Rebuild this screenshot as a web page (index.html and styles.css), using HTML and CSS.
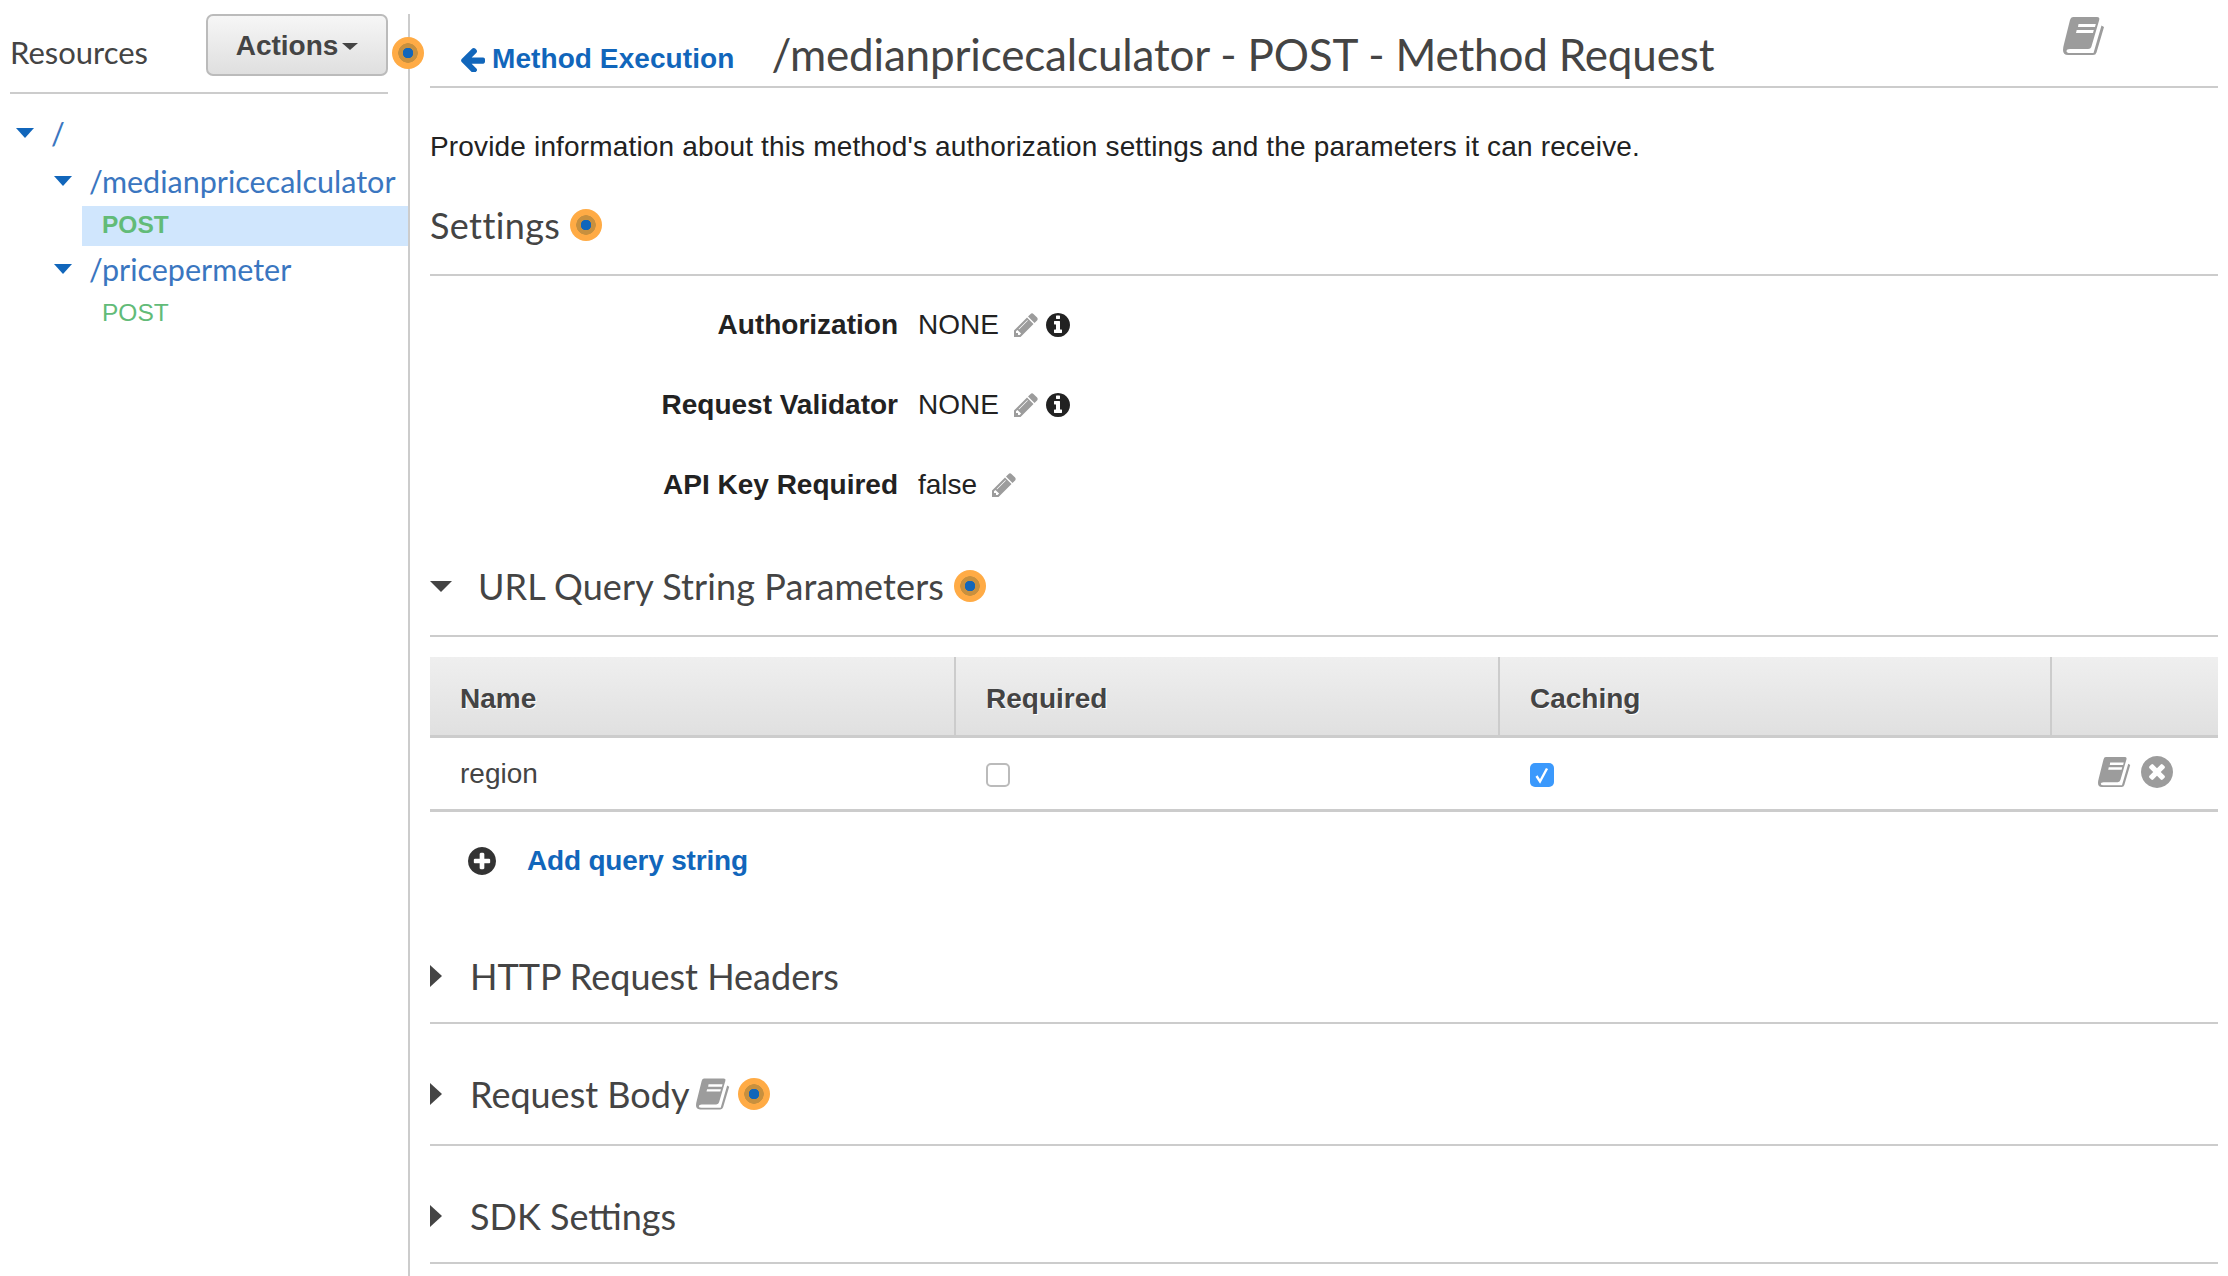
FILE: index.html
```html
<!DOCTYPE html>
<html lang="en">
<head>
    <meta charset="UTF-8">
    <meta name="viewport" content="width=device-width, initial-scale=1.0">
    <title>Method Request</title>
    <link rel="stylesheet" href="styles.css">
</head>
<body>
    <svg class="defs" width="0" height="0">
        <symbol id="book" viewBox="0 0 42 38">
            <path d="M10 0H34Q37 0 36.2 3L28.6 29Q28 32 25 32H7Q3.5 32 3.5 34T7 36H30.5L38.5 8.5L41 10L33.5 35.5Q32.8 38 30 38H5Q0 38 0 33Q0 30.5 1 27L7 3Q7.8 0 10 0ZM15.5 7L15 10H32L32.8 7ZM13.7 13L13 16H30L30.8 13Z" fill-rule="evenodd"/>
        </symbol>
        <symbol id="pencil" viewBox="128 128 1536 1536">
            <path d="M491 1536l91-91-235-235-91 91v107h128v128h107zm523-928q0-22-22-22-10 0-17 7l-542 542q-7 7-7 17 0 22 22 22 10 0 17-7l542-542q7-7 7-17zm-54-192l416 416-832 832h-416v-416zm683 96q0 53-37 90l-166 166-416-416 166-165q36-38 90-38 53 0 91 38l235 234q37 39 37 91z"/>
        </symbol>
        <symbol id="info" viewBox="128 128 1536 1536">
            <path d="M1152 1376v-160q0-14-9-23t-23-9h-96v-512q0-14-9-23t-23-9h-320q-14 0-23 9t-9 23v160q0 14 9 23t23 9h96v320h-96q-14 0-23 9t-9 23v160q0 14 9 23t23 9h448q14 0 23-9t9-23zm-128-896v-160q0-14-9-23t-23-9h-192q-14 0-23 9t-9 23v160q0 14 9 23t23 9h192q14 0 23-9t9-23zm640 416q0 209-103 385.5t-279.5 279.5-385.5 103-385.5-103-279.5-279.5-103-385.5 103-385.5 279.5-279.5 385.5-103 385.5 103 279.5 279.5 103 385.5z"/>
        </symbol>
        <symbol id="remove" viewBox="128 128 1536 1536">
            <path d="M1277 1122q0-26-19-45l-181-181 181-181q19-19 19-45 0-27-19-46l-90-90q-19-19-46-19-26 0-45 19l-181 181-181-181q-19-19-45-19-27 0-46 19l-90 90q-19 19-19 46 0 26 19 45l181 181-181 181q-19 19-19 45 0 27 19 46l90 90q19 19 46 19 26 0 45-19l181-181 181 181q19 19 45 19 27 0 46-19l90-90q19-19 19-46zm387-226q0 209-103 385.5t-279.5 279.5-385.5 103-385.5-103-279.5-279.5-103-385.5 103-385.5 279.5-279.5 385.5-103 385.5 103 279.5 279.5 103 385.5z"/>
        </symbol>
        <symbol id="plus" viewBox="128 128 1536 1536">
            <path d="M1344 960v-128q0-26-19-45t-45-19h-256v-256q0-26-19-45t-45-19h-128q-26 0-45 19t-19 45v256h-256q-26 0-45 19t-19 45v128q0 26 19 45t45 19h256v256q0 26 19 45t45 19h128q26 0 45-19t19-45v-256h256q26 0 45-19t19-45zm320-64q0 209-103 385.5t-279.5 279.5-385.5 103-385.5-103-279.5-279.5-103-385.5 103-385.5 279.5-279.5 385.5-103 385.5 103 279.5 279.5 103 385.5z"/>
        </symbol>
        <symbol id="back" viewBox="64 128 1600 1536">
            <path d="M1664 896v128q0 53-32.5 90.5t-84.5 37.5h-704l293 294q38 36 38 90t-38 90l-75 76q-37 37-90 37-52 0-91-37l-651-652q-37-37-37-90 0-52 37-91l651-650q38-38 91-38 52 0 90 38l75 74q38 38 38 91t-38 91l-293 293h704q52 0 84.5 37.5t32.5 90.5z"/>
        </symbol>
    </svg>

    <div class="page">
        <aside class="sidebar">
            <div class="sidebar-head">
                <span class="sidebar-title">Resources</span>
                <button class="btn-actions">Actions<span class="caret"></span></button>
            </div>
            <span class="dot dot-sidebar"></span>

            <ul class="tree">
                <li class="tree-row tree-root"><span class="tri-blue"></span><a class="tree-link">/</a></li>
                <li class="tree-row tree-child"><span class="tri-blue"></span><a class="tree-link">/medianpricecalculator</a></li>
                <li class="tree-row tree-method selected">POST</li>
                <li class="tree-row tree-child"><span class="tri-blue"></span><a class="tree-link">/pricepermeter</a></li>
                <li class="tree-row tree-method">POST</li>
            </ul>
        </aside>

        <main class="content">
            <div class="title-row">
                <a class="back-link"><svg class="icon-back"><use href="#back"/></svg>Method Execution</a>
                <h1>/medianpricecalculator - POST - Method Request</h1>
                <svg class="icon-book-top"><use href="#book"/></svg>
            </div>

            <p class="intro">Provide information about this method's authorization settings and the parameters it can receive.</p>

            <div class="section-head head-settings">
                <h2>Settings</h2>
                <span class="dot"></span>
            </div>

            <div class="settings">
                <div class="setting-row">
                    <span class="setting-label">Authorization</span>
                    <span class="setting-value">NONE</span>
                    <svg class="icon-pencil"><use href="#pencil"/></svg>
                    <svg class="icon-info"><use href="#info"/></svg>
                </div>
                <div class="setting-row">
                    <span class="setting-label">Request Validator</span>
                    <span class="setting-value">NONE</span>
                    <svg class="icon-pencil"><use href="#pencil"/></svg>
                    <svg class="icon-info"><use href="#info"/></svg>
                </div>
                <div class="setting-row">
                    <span class="setting-label">API Key Required</span>
                    <span class="setting-value">false</span>
                    <svg class="icon-pencil"><use href="#pencil"/></svg>
                </div>
            </div>

            <div class="section-head head-query">
                <span class="tri-down"></span>
                <h2>URL Query String Parameters</h2>
                <span class="dot"></span>
            </div>

            <table class="params">
                <colgroup>
                    <col class="col-name">
                    <col class="col-required">
                    <col class="col-caching">
                    <col>
                </colgroup>
                <thead>
                    <tr>
                        <th>Name</th>
                        <th>Required</th>
                        <th>Caching</th>
                        <th></th>
                    </tr>
                </thead>
                <tbody>
                    <tr>
                        <td>region</td>
                        <td><span class="check"></span></td>
                        <td>
                            <span class="check checked">
                                <svg viewBox="0 0 24 24"><path d="M6.5 13L10 18.5L17 5.5" fill="none" stroke="#fff" stroke-width="2.4"/></svg>
                            </span>
                        </td>
                        <td class="row-actions">
                            <svg class="icon-book-row"><use href="#book"/></svg>
                            <svg class="icon-remove"><use href="#remove"/></svg>
                        </td>
                    </tr>
                </tbody>
            </table>

            <div class="add-row">
                <svg class="icon-plus"><use href="#plus"/></svg>
                <a class="add-link">Add query string</a>
            </div>

            <div class="section-head head-headers">
                <span class="tri-right"></span>
                <h2>HTTP Request Headers</h2>
            </div>
            <div class="section-head head-body">
                <span class="tri-right"></span>
                <h2>Request Body</h2>
                <svg class="icon-book-head"><use href="#book"/></svg>
                <span class="dot"></span>
            </div>
            <div class="section-head head-sdk">
                <span class="tri-right"></span>
                <h2>SDK Settings</h2>
            </div>
        </main>
    </div>
</body>
</html>
```

FILE: styles.css
```css
* {
    box-sizing: border-box;
}
body {
    margin: 0;
    background: #fff;
    color: #222;
    font-family: "Liberation Sans", Arial, sans-serif;
    font-size: 28px;
    overflow: hidden;
}
.defs {
    position: absolute;
}
.page {
    display: flex;
    height: 1276px;
}
svg {
    display: block;
    fill: #9c9c9c;
}

/* sidebar */
.sidebar {
    position: relative;
    flex: 0 0 410px;
    margin-top: 14px;
    border-right: 2px solid #ccc;
}
.sidebar-head {
    display: flex;
    height: 80px;
    margin: 0 20px 0 10px;
    border-bottom: 2px solid #ccc;
}
.sidebar-title {
    font-family: Lato, sans-serif;
    font-size: 31px;
    line-height: 76px;
    color: #444;
}
.btn-actions {
    display: flex;
    align-items: center;
    justify-content: center;
    width: 182px;
    height: 62px;
    margin-left: auto;
    border: 2px solid #bbb;
    border-radius: 7px;
    background: linear-gradient(#f6f6f6, #dfdfdf);
    color: #444;
    font-family: "Liberation Sans", Arial, sans-serif;
    font-size: 28px;
    font-weight: bold;
    padding: 2px 0 0;
}
.caret {
    width: 0;
    height: 0;
    margin-left: 4px;
    border-style: solid;
    border-width: 7px 8px 0;
    border-color: #444 transparent transparent;
}
.dot {
    display: inline-block;
    flex: none;
    width: 32px;
    height: 32px;
    border-radius: 50%;
    background: radial-gradient(circle, #1166bb 0 5px, #c8903e 5.5px 9.5px, #ffab45 10px);
}
.dot-sidebar {
    position: absolute;
    top: 23px;
    left: 392px;
}
.tree {
    list-style: none;
    margin: 0;
    padding: 19px 0 0;
}
.tree-row {
    display: flex;
    align-items: center;
    height: 40px;
    margin-bottom: 3px;
}
.tree-root {
    padding-left: 16px;
    margin-bottom: 8px;
}
.tree-child {
    padding-left: 54px;
    margin-bottom: 5px;
}
.tree-method {
    margin-left: 82px;
    padding: 0 0 2px 20px;
    color: #62bb78;
    font-size: 24.5px;
}
.tree-method.selected {
    background: #d0e6fd;
    font-weight: bold;
}
.tri-blue {
    flex: none;
    width: 0;
    height: 0;
    margin-right: 17px;
    border-style: solid;
    border-width: 10px 9px 0;
    border-color: #1166bb transparent transparent;
}
.tree-link {
    font-family: Lato, sans-serif;
    font-size: 30.5px;
    color: #3a76c0;
}

/* main column */
.content {
    flex: 1;
    min-width: 0;
    padding: 0 10px 0 20px;
}
.title-row {
    display: flex;
    align-items: flex-start;
    height: 88px;
    border-bottom: 2px solid #ccc;
}
.back-link {
    display: flex;
    align-items: center;
    margin: 39px 0 0 29px;
    letter-spacing: 0.08px;
    line-height: 40px;
    color: #1166bb;
    font-weight: bold;
}
.icon-back {
    width: 26px;
    height: 25px;
    margin-right: 7px;
    fill: #1166bb;
}
h1 {
    margin: 26px 0 0 37px;
    font-family: Lato, sans-serif;
    font-size: 44px;
    font-weight: normal;
    letter-spacing: -0.16px;
    line-height: 56px;
    color: #444;
}
.icon-book-top {
    width: 42px;
    height: 38px;
    margin: 17px 113px 0 auto;
}
.intro {
    margin: 0;
    padding-top: 42px;
    letter-spacing: 0.16px;
    line-height: 34px;
}
.section-head {
    display: flex;
    align-items: center;
    border-bottom: 2px solid #ccc;
}
h2 {
    margin: 0;
    font-family: Lato, sans-serif;
    font-size: 36px;
    font-weight: normal;
    line-height: 44px;
    color: #444;
}
.section-head .dot {
    margin-left: 10px;
}
.head-settings {
    padding: 39px 0 27px;
}
.head-settings h2 {
    letter-spacing: 0.4px;
}
.head-query {
    padding: 39px 0 27px;
}
.head-query h2 {
    letter-spacing: 0.1px;
}
.head-headers {
    padding: 54px 0 24px;
}
.head-body {
    padding: 48px 0 28px;
}
.head-body .dot {
    margin-left: 8px;
}
.head-sdk {
    padding: 48px 0 24px;
}
.tri-down {
    flex: none;
    width: 0;
    height: 0;
    margin-right: 26px;
    border-style: solid;
    border-width: 11px 11px 0;
    border-color: #444 transparent transparent;
}
.tri-right {
    flex: none;
    width: 0;
    height: 0;
    margin-right: 28px;
    border-style: solid;
    border-width: 11px 0 11px 12px;
    border-color: transparent transparent transparent #444;
}
.icon-book-head {
    width: 34px;
    height: 32px;
    margin-left: 7px;
}

/* settings */
.settings {
    padding-top: 9px;
}
.setting-row {
    display: flex;
    align-items: center;
    height: 80px;
}
.setting-label {
    width: 468px;
    text-align: right;
    font-weight: bold;
}
.setting-value {
    margin-left: 20px;
}
.icon-pencil {
    width: 24px;
    height: 24px;
    margin-left: 15px;
}
.icon-info {
    width: 24px;
    height: 24px;
    margin-left: 8px;
    fill: #222;
}

/* parameter table */
.params {
    width: 100%;
    margin-top: 20px;
    border-collapse: collapse;
    table-layout: fixed;
}
.col-name {
    width: 525px;
}
.col-required {
    width: 544px;
}
.col-caching {
    width: 552px;
}
.params th {
    height: 79px;
    padding: 6px 0 0 30px;
    border-bottom: 3px solid #ccc;
    border-left: 2px solid #ccc;
    background: linear-gradient(#efefef, #e0e0e0);
    color: #444;
    font-weight: bold;
    text-align: left;
    text-shadow: 1px 1px 0 #fff;
}
.params th:first-child {
    border-left: 0;
}
.params td {
    height: 74px;
    padding: 2px 0 0 30px;
    border-bottom: 3px solid #ccc;
    color: #444;
}
.check {
    display: block;
    width: 24px;
    height: 24px;
    margin: 2px 0 0 1px;
    border: 2px solid #bbb;
    border-radius: 5px;
    background: #fff;
}
.check.checked {
    border: 0;
    background: #3b99fc;
}
.params td.row-actions {
    padding: 0 0 3px;
}
.row-actions svg {
    display: inline-block;
    vertical-align: middle;
}
.icon-book-row {
    width: 33px;
    height: 32px;
    margin-left: 47px;
}
.icon-remove {
    width: 32px;
    height: 32px;
    margin-left: 2px;
}

/* add row */
.add-row {
    display: flex;
    align-items: center;
    height: 88px;
    padding: 11px 0 0 38px;
}
.icon-plus {
    width: 28px;
    height: 28px;
    fill: #333;
}
.add-link {
    margin-left: 31px;
    color: #1166bb;
    font-weight: bold;
    letter-spacing: -0.2px;
}
```
